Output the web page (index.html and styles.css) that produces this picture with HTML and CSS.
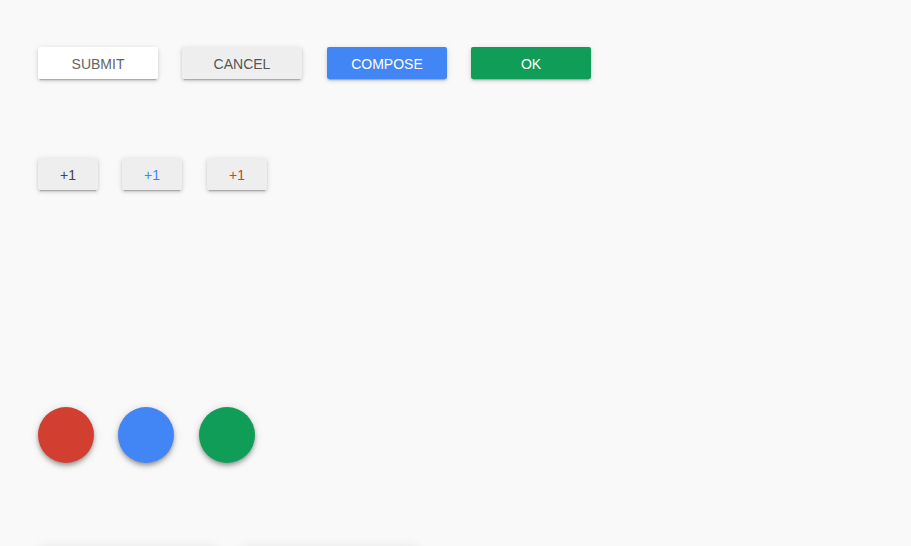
FILE: index.html
```html
<!DOCTYPE html>
<html>
<head>
<meta charset="utf-8">
<link rel="stylesheet" href="styles.css">
</head>
<body>
<div class="page">
  <div class="row row-main">
    <button class="btn btn-white">Submit</button>
    <button class="btn btn-grey">Cancel</button>
    <button class="btn btn-blue">Compose</button>
    <button class="btn btn-green">OK</button>
  </div>
  <div class="row row-small">
    <button class="btn btn-grey btn-small c-dark">+1</button>
    <button class="btn btn-grey btn-small c-blue">+1</button>
    <button class="btn btn-grey btn-small c-red">+1</button>
  </div>
  <div class="row row-fab">
    <div class="fab fab-red"></div>
    <div class="fab fab-blue"></div>
    <div class="fab fab-green"></div>
  </div>
  <div class="row row-cards">
    <div class="card"></div>
    <div class="card"></div>
  </div>
</div>
</body>
</html>
```
FILE: styles.css
```css
html, body {
  margin: 0;
  padding: 0;
  background: #f9f9f9;
  overflow: hidden;
  height: 546px;
}
.page {
  padding: 47px 0 0 38px;
  font-family: "Liberation Sans", Arial, sans-serif;
}
.row {
  display: flex;
}
.row-main {
  gap: 24px;
}
.row-small {
  margin-top: 79px;
  gap: 24px;
}
.row-fab {
  margin-top: 217px;
  gap: 24px;
}
.row-cards {
  margin-top: 84px;
  gap: 26px;
  padding-left: 2px;
}
.btn {
  width: 120px;
  height: 32px;
  border: none;
  border-radius: 2px;
  font-family: "Liberation Sans", Arial, sans-serif;
  font-size: 14px;
  text-transform: uppercase;
  padding: 1px 0 0 0;
  box-shadow: 0 2px 3px 0 rgba(0,0,0,0.13), 0 1px 6px 0 rgba(0,0,0,0.11), 0 3px 1px -2px rgba(0,0,0,0.18);
}
.btn-white { background: #ffffff; color: #646464; }
.btn-grey { background: #eeeeee; color: #555555; }
.btn-blue { background: #4285f4; color: #ffffff; }
.btn-green { background: #0f9d58; color: #ffffff; }
.btn-small {
  width: 60px;
  padding-top: 2px;
}
.row-small .btn-small:nth-child(3) { margin-left: 1px; }
.c-dark { color: #444444; }
.c-blue { color: #4285f4; }
.c-red { color: #d23f31; }
.fab {
  width: 56px;
  height: 56px;
  border-radius: 50%;
  box-shadow: 0 4px 5px 0 rgba(0,0,0,0.14), 0 1px 10px 0 rgba(0,0,0,0.12), 0 2px 4px -1px rgba(0,0,0,0.3);
}
.row-fab .fab:nth-child(3) { margin-left: 1px; }
.fab-red { background: #d23f31; }
.fab-blue { background: #4285f4; }
.fab-green { background: #0f9d58; }
.card {
  width: 176px;
  height: 150px;
  background: #f9f9f9;
  border-radius: 2px;
  box-shadow: 0 0 12px 0 rgba(0,0,0,0.08), 0 2px 4px 0 rgba(0,0,0,0.06);
}
.row-main .btn:nth-child(3) { margin-left: 1px; }
```
